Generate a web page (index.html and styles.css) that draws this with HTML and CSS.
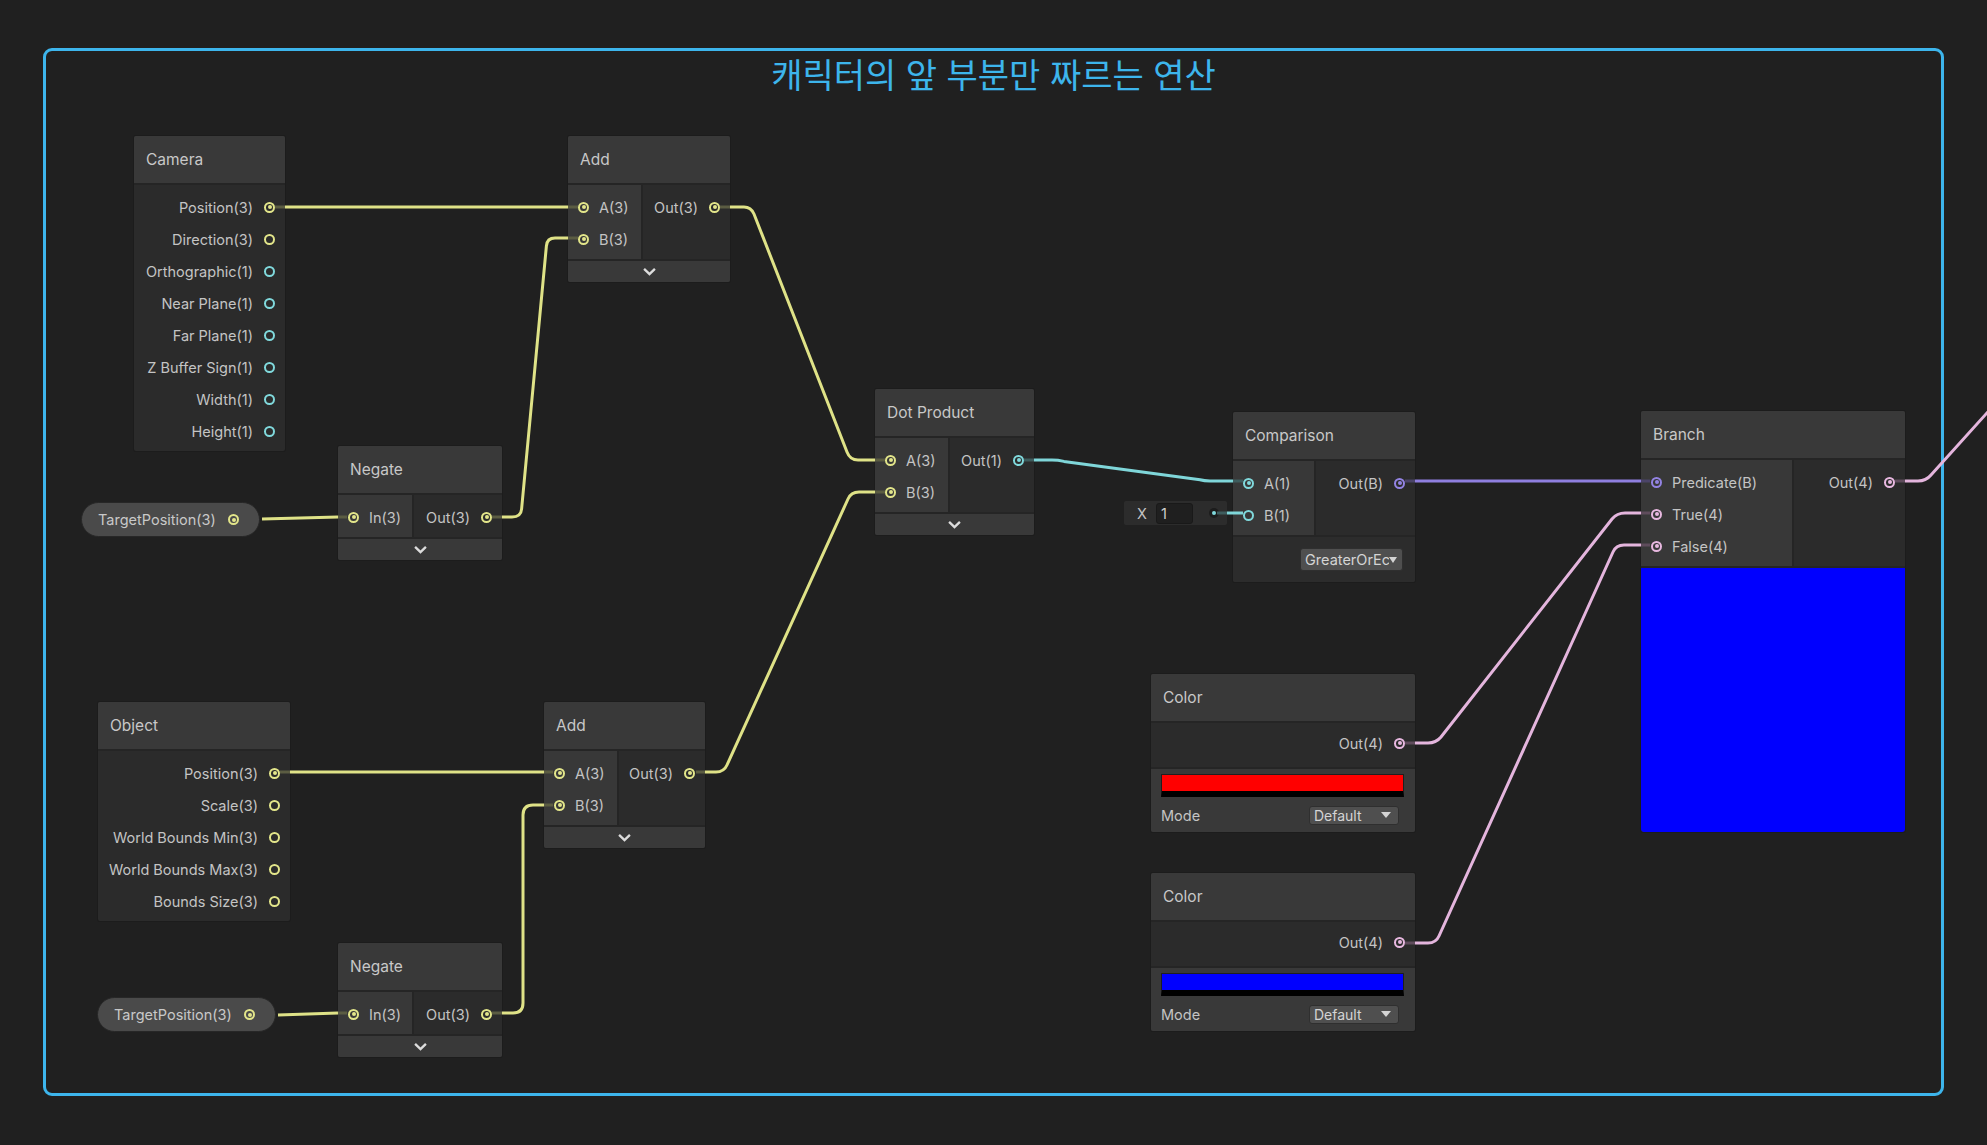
FILE: index.html
```html
<!DOCTYPE html>
<html lang="ko">
<head>
<meta charset="utf-8">
<title>Shader Graph</title>
<link rel="stylesheet" href="styles.css">
</head>
<body>
<div class="canvas">
  <div class="group">
    <div class="group-title">캐릭터의 앞 부분만 짜르는 연산</div>
  </div>

  <div class="node n-camera">
    <div class="head">Camera</div>
    <div class="body">
      <div class="col out">
        <div class="slot">Position(3)<i class="port y on"></i></div>
        <div class="slot">Direction(3)<i class="port y"></i></div>
        <div class="slot">Orthographic(1)<i class="port c"></i></div>
        <div class="slot">Near Plane(1)<i class="port c"></i></div>
        <div class="slot">Far Plane(1)<i class="port c"></i></div>
        <div class="slot">Z Buffer Sign(1)<i class="port c"></i></div>
        <div class="slot">Width(1)<i class="port c"></i></div>
        <div class="slot">Height(1)<i class="port c"></i></div>
      </div>
    </div>
  </div>

  <div class="node n-add1">
    <div class="head">Add</div>
    <div class="body">
      <div class="col in">
        <div class="slot"><i class="port y on"></i>A(3)</div>
        <div class="slot"><i class="port y on"></i>B(3)</div>
      </div>
      <div class="col out">
        <div class="slot">Out(3)<i class="port y on"></i></div>
      </div>
    </div>
    <div class="fold"><svg class="chev" viewBox="0 0 16 10"><polyline points="2,2 8,8 14,2"/></svg></div>
  </div>

  <div class="node n-negate1">
    <div class="head">Negate</div>
    <div class="body">
      <div class="col in">
        <div class="slot"><i class="port y on"></i>In(3)</div>
      </div>
      <div class="col out">
        <div class="slot">Out(3)<i class="port y on"></i></div>
      </div>
    </div>
    <div class="fold"><svg class="chev" viewBox="0 0 16 10"><polyline points="2,2 8,8 14,2"/></svg></div>
  </div>

  <div class="pill pill1">TargetPosition(3)<i class="port y on"></i></div>

  <div class="node n-dot">
    <div class="head">Dot Product</div>
    <div class="body">
      <div class="col in">
        <div class="slot"><i class="port y on"></i>A(3)</div>
        <div class="slot"><i class="port y on"></i>B(3)</div>
      </div>
      <div class="col out">
        <div class="slot">Out(1)<i class="port c on"></i></div>
      </div>
    </div>
    <div class="fold"><svg class="chev" viewBox="0 0 16 10"><polyline points="2,2 8,8 14,2"/></svg></div>
  </div>

  <div class="inline-x">
    <span class="ix-label">X</span>
    <span class="ix-field">1</span>
    <span class="ix-dot"></span>
  </div>

  <div class="node n-comp">
    <div class="head">Comparison</div>
    <div class="body">
      <div class="col in">
        <div class="slot"><i class="port c on"></i>A(1)</div>
        <div class="slot"><i class="port c"></i>B(1)</div>
      </div>
      <div class="col out">
        <div class="slot">Out(B)<i class="port p on"></i></div>
      </div>
    </div>
    <div class="extra">
      <div class="dropdown dd-comp"><span class="dd-text">GreaterOrEc</span><span class="tri"></span></div>
    </div>
  </div>

  <div class="node n-branch">
    <div class="head">Branch</div>
    <div class="body">
      <div class="col in">
        <div class="slot"><i class="port p on"></i>Predicate(B)</div>
        <div class="slot"><i class="port k on"></i>True(4)</div>
        <div class="slot"><i class="port k on"></i>False(4)</div>
      </div>
      <div class="col out">
        <div class="slot">Out(4)<i class="port k on"></i></div>
      </div>
    </div>
    <div class="preview"></div>
  </div>

  <div class="node n-object">
    <div class="head">Object</div>
    <div class="body">
      <div class="col out">
        <div class="slot">Position(3)<i class="port y on"></i></div>
        <div class="slot">Scale(3)<i class="port y"></i></div>
        <div class="slot">World Bounds Min(3)<i class="port y"></i></div>
        <div class="slot">World Bounds Max(3)<i class="port y"></i></div>
        <div class="slot">Bounds Size(3)<i class="port y"></i></div>
      </div>
    </div>
  </div>

  <div class="node n-add2">
    <div class="head">Add</div>
    <div class="body">
      <div class="col in">
        <div class="slot"><i class="port y on"></i>A(3)</div>
        <div class="slot"><i class="port y on"></i>B(3)</div>
      </div>
      <div class="col out">
        <div class="slot">Out(3)<i class="port y on"></i></div>
      </div>
    </div>
    <div class="fold"><svg class="chev" viewBox="0 0 16 10"><polyline points="2,2 8,8 14,2"/></svg></div>
  </div>

  <div class="node n-negate2">
    <div class="head">Negate</div>
    <div class="body">
      <div class="col in">
        <div class="slot"><i class="port y on"></i>In(3)</div>
      </div>
      <div class="col out">
        <div class="slot">Out(3)<i class="port y on"></i></div>
      </div>
    </div>
    <div class="fold"><svg class="chev" viewBox="0 0 16 10"><polyline points="2,2 8,8 14,2"/></svg></div>
  </div>

  <div class="pill pill2">TargetPosition(3)<i class="port y on"></i></div>

  <div class="node n-color1">
    <div class="head">Color</div>
    <div class="c-out">
      <div class="slot">Out(4)<i class="port k on"></i></div>
    </div>
    <div class="props">
      <div class="swatch red"></div>
      <div class="mode-row">
        <span>Mode</span>
        <div class="dropdown dd-mode"><span class="dd-text">Default</span><span class="tri"></span></div>
      </div>
    </div>
  </div>

  <div class="node n-color2">
    <div class="head">Color</div>
    <div class="c-out">
      <div class="slot">Out(4)<i class="port k on"></i></div>
    </div>
    <div class="props">
      <div class="swatch blue"></div>
      <div class="mode-row">
        <span>Mode</span>
        <div class="dropdown dd-mode"><span class="dd-text">Default</span><span class="tri"></span></div>
      </div>
    </div>
  </div>

  <svg class="wires" width="1987" height="1145" viewBox="0 0 1987 1145">
    <g class="dim-y">
      <path d="M275,207 H285"/><path d="M568,207 H578"/>
      <path d="M338,517 H347"/><path d="M492,517 H502"/><path d="M568,238 H578"/>
      <path d="M720,207 H730"/><path d="M875,460 H885"/>
      <path d="M696,772 H705"/><path d="M875,492 H885"/>
      <path d="M280,772 H290"/><path d="M544,772 H553"/>
      <path d="M338,1013 H347"/><path d="M492,1013 H502"/><path d="M544,805 H553"/>
    </g>
    <g class="wire-y">
      <path d="M285,207 H568"/>
      <path d="M262,519 L338,517"/>
      <path d="M502,517 H512 Q521,517 521.6,509 L546.4,246 Q547,238 555,238 H568"/>
      <path d="M730,207 H744 Q751,207 754,214 L847,452 Q850,460 858,460 H875"/>
      <path d="M705,772 H716 Q724,772 727,765 L848,499 Q851,492 859,492 H875"/>
      <path d="M290,772 H544"/>
      <path d="M278,1015 L338,1013"/>
      <path d="M502,1013 H513 Q523,1013 523,1003 V815 Q523,805 533,805 H544"/>
    </g>
    <g class="dim-c">
      <path d="M1024,460 H1034"/><path d="M1233,481 H1243"/>
      <path d="M1217,513 H1227"/>
    </g>
    <g class="wire-c">
      <path d="M1034,460 H1052 Q1058,460 1064,461.4 L1200,479.8 Q1204,481 1210,481 H1233"/>
      <path d="M1227,513 H1243"/>
    </g>
    <g class="dim-p">
      <path d="M1405,481 H1415"/><path d="M1641,481 H1650"/>
    </g>
    <g class="wire-p">
      <path d="M1415,481 H1641"/>
    </g>
    <g class="dim-k">
      <path d="M1405,743 H1415"/><path d="M1405,943 H1415"/>
      <path d="M1641,513 H1650"/><path d="M1641,545 H1650"/>
      <path d="M1895,481 H1905"/>
    </g>
    <g class="wire-k">
      <path d="M1415,743 H1428 Q1436,743 1441,737 L1612,519 Q1617,513 1625,513 H1641"/>
      <path d="M1415,943 H1428 Q1436,943 1439,936 L1613,552 Q1616,545 1624,545 H1641"/>
      <path d="M1905,481 H1918 Q1926,481 1931,475 L1995,404"/>
    </g>
  </svg>
</div>
</body>
</html>
```

FILE: styles.css
```css
html, body {
  margin: 0;
  padding: 0;
  background: #202020;
}

.canvas {
  position: relative;
  width: 1987px;
  height: 1145px;
  overflow: hidden;
  background: #202020;
  font-family: Inter, "Noto Sans", sans-serif;
  font-size: 14.5px;
  color: #c4c4c4;
}

/* group frame */
.group {
  position: absolute;
  left: 43px;
  top: 48px;
  width: 1901px;
  height: 1048px;
  box-sizing: border-box;
  border: 3px solid #3db5ec;
  border-radius: 9px;
  display: flex;
  justify-content: center;
}

.group-title {
  margin-top: 2px;
  font-family: "Noto Sans CJK KR", "Noto Sans", sans-serif;
  font-size: 34px;
  line-height: 42px;
  color: #3db5ec;
  font-weight: 400;
}

/* nodes */
.node {
  position: absolute;
  background: #2b2b2b;
  border-radius: 2px;
  box-shadow: 0 0 0 1px #1c1c1c;
  overflow: hidden;
}

.head {
  height: 47px;
  background: #393939;
  border-bottom: 2px solid #252525;
  display: flex;
  align-items: center;
  padding-left: 12px;
  font-size: 15.5px;
  color: #c8c8c8;
}

.body {
  display: flex;
}

.col {
  padding: 6px 0 4px;
}

.col.in {
  background: #383838;
  border-right: 2px solid #252525;
  flex: none;
  box-sizing: border-box;
}

.col.out {
  flex: 1;
}

.slot {
  height: 32px;
  display: flex;
  align-items: center;
  white-space: nowrap;
}

.col.in .slot {
  padding-left: 10px;
  gap: 10px;
}

.col.out .slot,
.c-out .slot {
  justify-content: flex-end;
  padding-right: 10px;
  gap: 11px;
}

.fold {
  height: 21px;
  background: #393939;
  border-top: 2px solid #252525;
  display: flex;
  align-items: center;
  justify-content: center;
}

.chev {
  width: 15px;
  height: 9px;
}

.chev polyline {
  fill: none;
  stroke: #dcdcdc;
  stroke-width: 2.6;
}

/* ports */
.port {
  display: block;
  flex: none;
  position: relative;
  width: 11px;
  height: 11px;
  box-sizing: border-box;
  border: 2px solid currentColor;
  border-radius: 50%;
}

.port.on::after {
  content: "";
  position: absolute;
  inset: 1.5px;
  border-radius: 50%;
  background: currentColor;
}

.port.y { color: #e2e58a; }
.port.c { color: #80d9dc; }
.port.p { color: #9383e3; }
.port.k { color: #e8b8e0; }

/* node placement */
.n-camera { left: 134px; top: 136px; width: 151px; }
.n-object { left: 98px; top: 702px; width: 192px; }

.n-add1 { left: 568px; top: 136px; width: 162px; }
.n-add2 { left: 544px; top: 702px; width: 161px; }
.n-add1 .col.in,
.n-add2 .col.in { width: 75px; }

.n-negate1 { left: 338px; top: 446px; width: 164px; }
.n-negate2 { left: 338px; top: 943px; width: 164px; }
.n-negate1 .col.in,
.n-negate2 .col.in { width: 76px; }

.n-dot { left: 875px; top: 389px; width: 159px; }
.n-dot .col.in { width: 75px; }

.n-comp { left: 1233px; top: 412px; width: 182px; }
.n-comp .col.in { width: 83px; }

.n-branch { left: 1641px; top: 411px; width: 264px; }
.n-branch .col.in { width: 153px; }

.n-color1 { left: 1151px; top: 674px; width: 264px; }
.n-color2 { left: 1151px; top: 873px; width: 264px; }

/* comparison extension */
.extra {
  height: 45px;
  border-top: 2px solid #252525;
  background: #2c2c2c;
  display: flex;
  align-items: center;
  justify-content: flex-end;
  padding-right: 12px;
}

.dropdown {
  box-sizing: border-box;
  display: flex;
  align-items: center;
  background: #4f4f4f;
  border: 1px solid #2f2f2f;
  border-radius: 3px;
  color: #d4d4d4;
  overflow: hidden;
  white-space: nowrap;
  position: relative;
}

.dd-comp {
  width: 103px;
  height: 23px;
  padding-left: 4px;
  font-size: 14.5px;
}

.dd-comp .dd-text {
  width: 84px;
  overflow: hidden;
}

.dd-mode {
  width: 90px;
  height: 19px;
  padding-left: 4px;
  font-size: 14px;
}

.dd-mode .dd-text {
  flex: 1;
}

.tri {
  width: 0;
  height: 0;
  border-left: 5px solid transparent;
  border-right: 5px solid transparent;
  border-top: 6px solid #d4d4d4;
  margin-right: 7px;
  flex: none;
}

.dd-comp .tri {
  margin-right: 4px;
  border-left-width: 4.5px;
  border-right-width: 4.5px;
}

/* branch preview */
.preview {
  height: 264px;
  background: #0000ff;
  border-top: 2px solid #252525;
  border-radius: 0 0 3px 3px;
}

/* color node */
.c-out {
  padding: 4px 0 8px;
  border-bottom: 2px solid #252525;
}

.props {
  background: #393939;
  padding: 5px 11px 6px 10px;
}

.swatch {
  height: 23px;
  box-sizing: border-box;
  border: 1px solid #1f1f1f;
  border-bottom: 6px solid #000;
}

.swatch.red { background: #ff0000; }
.swatch.blue { background: #0000ff; }

.mode-row {
  margin-top: 7px;
  height: 22px;
  display: flex;
  align-items: center;
  justify-content: space-between;
  padding-right: 5px;
}

/* property pills */
.pill {
  position: absolute;
  width: 179px;
  height: 35px;
  box-sizing: border-box;
  border-radius: 18px;
  background: #4a4a4a;
  border: 1px solid #272727;
  display: flex;
  align-items: center;
  justify-content: space-between;
  padding-left: 16px;
  padding-right: 20px;
  white-space: nowrap;
  color: #c8c8c8;
}

.pill1 { left: 81px; top: 502px; }
.pill2 { left: 97px; top: 997px; }

/* inline value for comparison B */
.inline-x {
  position: absolute;
  left: 1124px;
  top: 501px;
  width: 103px;
  height: 24px;
  box-sizing: border-box;
  background: #2c2c2c;
  border-radius: 2px;
  display: flex;
  align-items: center;
  padding-left: 13px;
}

.ix-label {
  width: 19px;
  color: #c4c4c4;
}

.ix-field {
  width: 37px;
  height: 21px;
  box-sizing: border-box;
  background: #1f1f1f;
  border: 1px solid #191919;
  border-radius: 3px;
  padding-left: 4px;
  line-height: 19px;
  color: #d0d0d0;
}

.ix-dot {
  margin-left: 16px;
  width: 10px;
  height: 10px;
  border-radius: 50%;
  background: #1c1c1c;
  position: relative;
}

.ix-dot::after {
  content: "";
  position: absolute;
  inset: 3px;
  border-radius: 50%;
  background: #80d9dc;
}

/* wires */
.wires {
  position: absolute;
  left: 0;
  top: 0;
  pointer-events: none;
}

.wires path {
  fill: none;
  stroke-width: 3;
}

.wire-y path { stroke: #dfe287; }
.dim-y path { stroke: #5b5c42; }
.wire-c path { stroke: #7fd6d9; }
.dim-c path { stroke: #3e5c5d; }
.wire-p path { stroke: #8f7fdf; }
.dim-p path { stroke: #4b4468; }
.wire-k path { stroke: #e4b5dd; }
.dim-k path { stroke: #5f4c5c; }
```
